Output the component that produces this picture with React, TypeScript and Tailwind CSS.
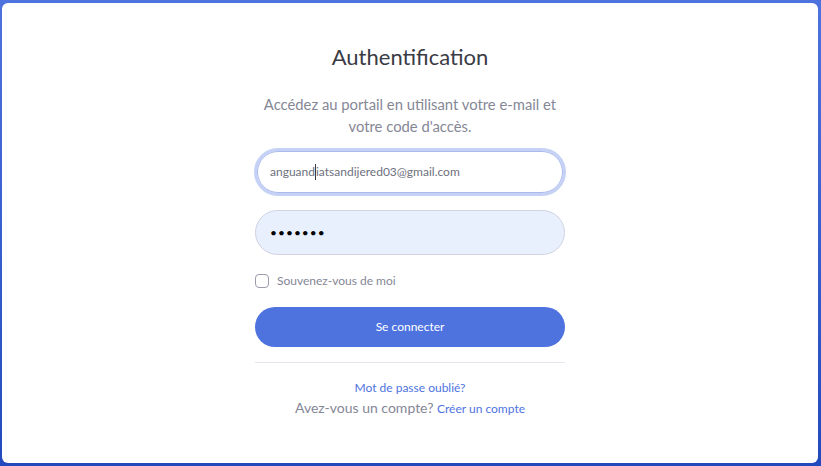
import React from "react";

export default function App() {
  return (
    <div className="w-[821px] h-[466px] bg-gradient-to-b from-[#4e73df] to-[#224abe] pt-[3px] pl-[2px] pr-[3px] pb-[3px]" style={{ fontFamily: "Lato, 'Noto Sans', sans-serif" }}>
      <div className="w-full h-full bg-white rounded-[6px] flex flex-col items-center">
        <div className="w-[310px] flex flex-col items-center">
          <h1 className="mt-[39px] text-[22px] leading-[30px] text-[#3a3b45] font-normal">Authentification</h1>
          <p className="mt-[21px] text-[14.8px] leading-[22px] text-[#858796] text-center w-[320px]">
            Accédez au portail en utilisant votre e-mail et votre code d'accès.
          </p>
          <div className="mt-[11px] w-[312px] h-[48px] rounded-full border-[3px] border-[#c5d1f5] flex">
            <div className="flex-1 rounded-full border border-[#a9b9ec] bg-white flex items-center pl-[12px] text-[12px] text-[#6e707e]">
              <span>anguand</span>
              <span className="inline-block w-px h-[16px] bg-[#3a3b45]"></span>
              <span>iatsandijered03@gmail.com</span>
            </div>
          </div>
          <div className="mt-[14px] w-[310px] h-[45px] rounded-full border border-[#d1d3e2] bg-[#e8f0fe] flex items-center pl-[14px] text-[12px] tracking-[1px] text-black">
            •••••••
          </div>
          <label className="mt-[17px] self-start flex items-center gap-[8px] text-[12px] text-[#858796]">
            <span className="inline-block w-[14px] h-[14px] rounded-[4px] border border-[#9a9cab] bg-white"></span>
            Souvenez-vous de moi
          </label>
          <button className="mt-[17px] w-[310px] h-[40px] rounded-full bg-[#4e73df] text-white text-[12px]">Se connecter</button>
          <div className="mt-[15px] w-[310px] h-px bg-[#e3e6f0]"></div>
          <a className="mt-[17px] text-[12px] leading-[16px] text-[#4e73df]">Mot de passe oublié?</a>
          <div className="mt-[2px] text-[14px] leading-[20px] text-[#858796]">
            Avez-vous un compte? <a className="text-[12px] text-[#4e73df]">Créer un compte</a>
          </div>
        </div>
      </div>
    </div>
  );
}
